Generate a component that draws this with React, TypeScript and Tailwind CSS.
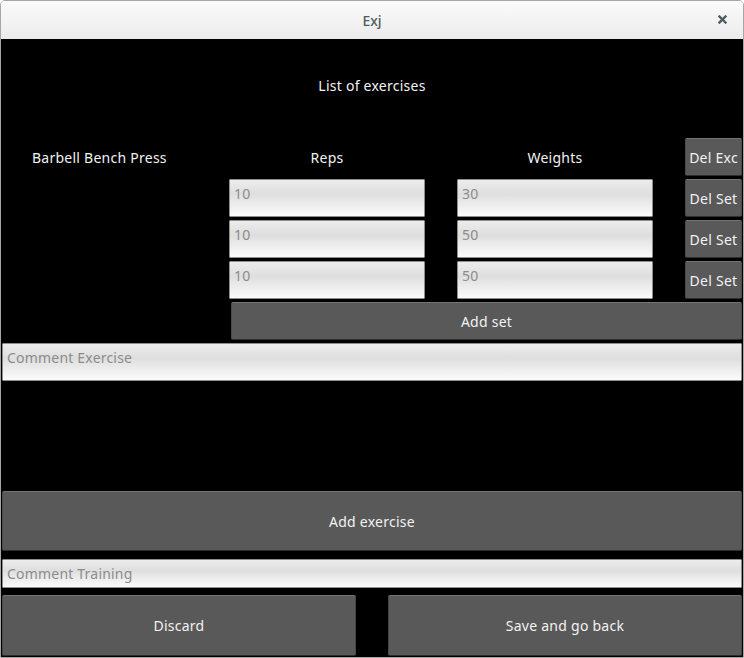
import { useState } from "react";

type SetRow = { reps: string; weight: string };

const FONT = "font-['Noto_Sans','DejaVu_Sans',sans-serif]";

const BTN =
  "flex items-center justify-center rounded-[2px] border border-t-[#747474] border-x-[#4a4a4a] border-b-[#2e2e2e] bg-[#595959] text-[14px] tracking-[0.25px] text-[#f2f2f2]";

const FIELD =
  "rounded-[1px] border border-[#8e8e8e] bg-[linear-gradient(to_bottom,#ececec,#dedede_40%,#e6e6e6_55%,#fbfbfb)] px-[4px] text-[14px] tracking-[0.2px] text-[#555] outline-none placeholder:text-[#8c8c8c]";

function CloseIcon() {
  return (
    <svg width="9" height="9" viewBox="0 0 9 9" className="text-[#4f5b60]">
      <path d="M1.5 1.5 L7.5 7.5 M7.5 1.5 L1.5 7.5" stroke="currentColor" strokeWidth="2.4" strokeLinecap="square" />
    </svg>
  );
}

export default function App() {
  const [sets] = useState<SetRow[]>([
    { reps: "10", weight: "30" },
    { reps: "10", weight: "50" },
    { reps: "10", weight: "50" },
  ]);

  return (
    <div className={`${FONT} h-[658px] w-[744px] overflow-hidden bg-white`}>
      <div className="flex h-[658px] w-[744px] flex-col overflow-hidden rounded-t-[5px] border border-[#a6a6a6]">
        {/* title bar */}
        <div className="relative flex h-[38px] shrink-0 items-center justify-center bg-[linear-gradient(to_bottom,#fbfbfb,#ebebeb)]">
          <span className="text-[14px] font-medium text-[#505b5f]">Exj</span>
          <span className="absolute right-[16px] top-[14px]">
            <CloseIcon />
          </span>
        </div>

        <div className="flex flex-1 flex-col bg-black text-[14px] tracking-[0.25px] text-[#f2f2f2]">
          <div className="h-[99px] pt-[37px] text-center leading-[20px]">List of exercises</div>

          <div className="grid grid-cols-[228px_196px_32px_196px_32px_57px] gap-y-[3px]">
            <div className="flex h-[38px] items-center pl-[31px]">Barbell Bench Press</div>
            <div className="flex h-[38px] items-center justify-center">Reps</div>
            <div />
            <div className="flex h-[38px] items-center justify-center">Weights</div>
            <div />
            <button className={`${BTN} h-[38px]`}>Del Exc</button>

            {sets.map((s, i) => (
              <div key={i} className="contents">
                <div />
                <input className={`${FIELD} h-[38px] pt-[3px] pb-[13px]`} placeholder={s.reps} />
                <div />
                <input className={`${FIELD} h-[38px] pt-[3px] pb-[13px]`} placeholder={s.weight} />
                <div />
                <button className={`${BTN} h-[38px]`}>Del Set</button>
              </div>
            ))}
          </div>

          <button className={`${BTN} ml-[230px] mr-px mt-[3px] h-[38px]`}>Add set</button>

          <input
            className={`${FIELD} mx-px mt-[3px] h-[38px] pt-[1px] pb-[11px]`}
            placeholder="Comment Exercise"
          />

          <button className={`${BTN} mx-px mt-[110px] h-[60px]`}>Add exercise</button>

          <input
            className={`${FIELD} mx-px mt-[8px] h-[29px] pb-[1px]`}
            placeholder="Comment Training"
          />

          <div className="mx-px mt-[7px] flex h-[61px] gap-[32px]">
            <button className={`${BTN} w-[354px]`}>Discard</button>
            <button className={`${BTN} w-[354px]`}>Save and go back</button>
          </div>
        </div>
      </div>
    </div>
  );
}
